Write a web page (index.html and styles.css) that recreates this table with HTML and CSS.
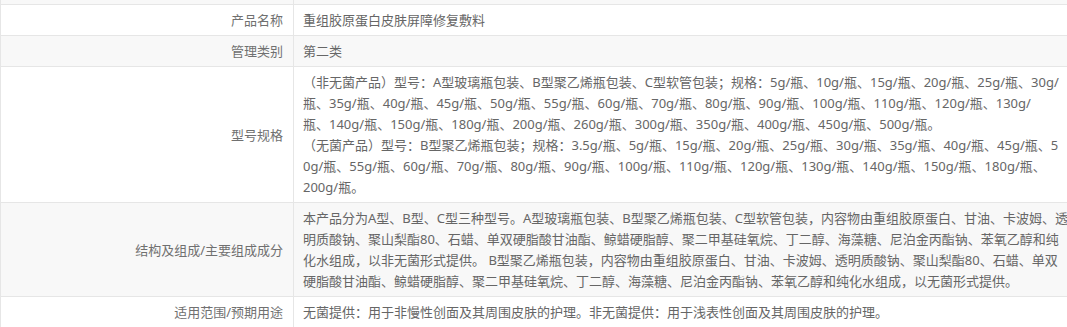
FILE: index.html
```html
<!DOCTYPE html>
<html lang="zh-CN">
<head>
<meta charset="utf-8">
<title>产品信息</title>
<link rel="stylesheet" href="styles.css">
</head>
<body>
<table class="spec">
  <colgroup>
    <col class="col-label">
    <col class="col-value">
  </colgroup>
  <tbody>
    <tr class="row-cut alt"><th></th><td></td></tr>
    <tr><th>产品名称</th><td>重组胶原蛋白皮肤屏障修复敷料</td></tr>
    <tr class="alt"><th>管理类别</th><td>第二类</td></tr>
    <tr>
      <th>型号规格</th>
      <td class="lines">（非无菌产品）型号：A型玻璃瓶包装、B型聚乙烯瓶包装、C型软管包装；规格：5g/瓶、10g/瓶、15g/瓶、20g/瓶、25g/瓶、30g/<br>瓶、35g/瓶、40g/瓶、45g/瓶、50g/瓶、55g/瓶、60g/瓶、70g/瓶、80g/瓶、90g/瓶、100g/瓶、110g/瓶、120g/瓶、130g/<br>瓶、140g/瓶、150g/瓶、180g/瓶、200g/瓶、260g/瓶、300g/瓶、350g/瓶、400g/瓶、450g/瓶、500g/瓶。<br>（无菌产品）型号：B型聚乙烯瓶包装；规格：3.5g/瓶、5g/瓶、15g/瓶、20g/瓶、25g/瓶、30g/瓶、35g/瓶、40g/瓶、45g/瓶、5<br>0g/瓶、55g/瓶、60g/瓶、70g/瓶、80g/瓶、90g/瓶、100g/瓶、110g/瓶、120g/瓶、130g/瓶、140g/瓶、150g/瓶、180g/瓶、<br>200g/瓶。</td>
    </tr>
    <tr class="alt">
      <th>结构及组成/主要组成成分</th>
      <td class="lines">本产品分为A型、B型、C型三种型号。A型玻璃瓶包装、B型聚乙烯瓶包装、C型软管包装，内容物由重组胶原蛋白、甘油、卡波姆、透<br>明质酸钠、聚山梨酯80、石蜡、单双硬脂酸甘油酯、鲸蜡硬脂醇、聚二甲基硅氧烷、丁二醇、海藻糖、尼泊金丙酯钠、苯氧乙醇和纯<br>化水组成，以非无菌形式提供。 B型聚乙烯瓶包装，内容物由重组胶原蛋白、甘油、卡波姆、透明质酸钠、聚山梨酯80、石蜡、单双<br>硬脂酸甘油酯、鲸蜡硬脂醇、聚二甲基硅氧烷、丁二醇、海藻糖、尼泊金丙酯钠、苯氧乙醇和纯化水组成，以无菌形式提供。</td>
    </tr>
    <tr><th>适用范围/预期用途</th><td>无菌提供：用于非慢性创面及其周围皮肤的护理。非无菌提供：用于浅表性创面及其周围皮肤的护理。</td></tr>
  </tbody>
</table>
</body>
</html>
```

FILE: styles.css
```css
html, body {
  margin: 0;
  padding: 0;
  background: #ffffff;
}

body {
  font-family: "Noto Sans", "Noto Sans CJK SC", sans-serif;
  font-size: 13px;
  line-height: 21px;
  color: #666666;
  overflow: hidden;
}

.spec {
  width: 1067px;
  border-collapse: collapse;
  table-layout: fixed;
  border-left: 1px solid #e6e6e6;
}

.col-label {
  width: 293px;
}

.spec th,
.spec td {
  border-bottom: 1px solid #e6e6e6;
  padding: 5px 7px 4px 9px;
  vertical-align: middle;
  text-align: left;
}

.spec td.lines {
  white-space: nowrap;
}

.spec th {
  font-weight: normal;
  text-align: right;
  color: #707070;
  padding-right: 10px;
  border-right: 1px solid #e6e6e6;
}

.spec tr.alt th,
.spec tr.alt td {
  background: #f8f8f8;
}

.spec tr.row-cut th,
.spec tr.row-cut td {
  height: 4px;
  padding: 0;
  line-height: 0;
}
```
